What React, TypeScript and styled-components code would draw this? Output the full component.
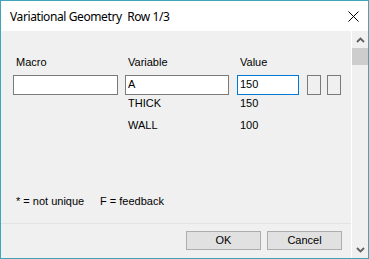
import styled, { createGlobalStyle } from 'styled-components'

const GlobalStyle = createGlobalStyle`
  html, body {
    margin: 0;
    padding: 0;
    background: #ffffff;
  }
  body {
    font-family: 'Liberation Sans', Arial, sans-serif;
  }
`

const Window = styled.div`
  width: 369px;
  height: 259px;
  box-sizing: border-box;
  border: 1px solid #3fa6b7;
  display: flex;
  flex-direction: column;
  background: #f0f0f0;
`
const TitleBar = styled.div`
  height: 30px;
  flex-shrink: 0;
  background: #ffffff;
  display: flex;
  align-items: center;
  justify-content: space-between;
  padding: 0 9px 0 9px;
`
const Title = styled.div`
  font-family: 'Noto Sans', 'Open Sans', sans-serif;
  font-size: 12px;
  letter-spacing: -0.4px;
  color: #000;
  white-space: pre;
`
const CloseBox = styled.div`
  width: 12px;
  height: 12px;
  display: flex;
  align-items: center;
  justify-content: center;
`
const Body = styled.div`
  flex: 1;
  display: flex;
  flex-direction: row;
  min-height: 0;
`
const Content = styled.div`
  flex: 1;
  display: flex;
  flex-direction: column;
  font-size: 11px;
  line-height: 13px;
  color: #000;
`
const Fields = styled.div`
  display: grid;
  grid-template-columns: 112px 112px 70px 20px 14px;
  grid-template-rows: 19px 22px 22px 13px;
  padding: 25px 0 0 12px;
  align-items: start;
`
const Label = styled.div<{ $inset?: boolean }>`
  padding-left: ${(p) => (p.$inset ? 3 : 0)}px;
  white-space: nowrap;
`
const Input = styled.div<{ $w: number; $focus?: boolean }>`
  width: ${(p) => p.$w}px;
  height: 20px;
  box-sizing: border-box;
  border: 1px solid ${(p) => (p.$focus ? '#0078d7' : '#7a7a7a')};
  background: #ffffff;
  padding: 2px 2px 0 2px;
  white-space: nowrap;
`
const SmallButton = styled.div`
  width: 14px;
  height: 20px;
  box-sizing: border-box;
  border: 1px solid #7a7a7a;
  background: #f0f0f0;
`
const Notes = styled.div`
  margin-top: auto;
  margin-bottom: 15px;
  display: flex;
  padding-left: 15px;
`
const Note = styled.div<{ $w?: number }>`
  width: ${(p) => (p.$w ? `${p.$w}px` : 'auto')};
  white-space: nowrap;
`
const Footer = styled.div`
  border-top: 1px solid #e3e3e3;
  padding: 7px 9px 8px 0;
  display: flex;
  justify-content: flex-end;
  gap: 6px;
`
const Button = styled.div`
  width: 75px;
  height: 19px;
  box-sizing: border-box;
  border: 1px solid #adadad;
  background: #e1e1e1;
  display: flex;
  align-items: center;
  justify-content: center;
`
const ScrollBar = styled.div`
  width: 16px;
  border-left: 1px solid #ffffff;
  display: flex;
  flex-direction: column;
  background: #f0f0f0;
`
const ArrowBox = styled.div`
  height: 17px;
  display: flex;
  align-items: center;
  justify-content: center;
`
const Thumb = styled.div`
  height: 17px;
  background: #cdcdcd;
`
const Track = styled.div`
  flex: 1;
`

const Chevron = ({ up }: { up?: boolean }) => (
  <svg width="9" height="6" viewBox="0 0 9 6">
    <path
      d={up ? 'M1 5 L4.5 1.5 L8 5' : 'M1 1 L4.5 4.5 L8 1'}
      fill="none"
      stroke="#606060"
      strokeWidth="1.8"
    />
  </svg>
)

const App = () => {
  return (
    <>
      <GlobalStyle />
      <Window>
        <TitleBar>
          <Title>Variational Geometry  Row 1/3</Title>
          <CloseBox>
            <svg width="11" height="11" viewBox="0 0 11 11">
              <path d="M0.5 0.5 L10.5 10.5 M10.5 0.5 L0.5 10.5" stroke="#000" strokeWidth="1" />
            </svg>
          </CloseBox>
        </TitleBar>
        <Body>
          <Content>
            <Fields>
              <Label $inset>Macro</Label>
              <Label $inset>Variable</Label>
              <Label $inset>Value</Label>
              <div />
              <div />
              <Input $w={105} />
              <Input $w={104}>A</Input>
              <Input $w={62} $focus>
                150
              </Input>
              <SmallButton />
              <SmallButton />
              <div />
              <Label $inset>THICK</Label>
              <Label $inset>150</Label>
              <div />
              <div />
              <div />
              <Label $inset>WALL</Label>
              <Label $inset>100</Label>
              <div />
              <div />
            </Fields>
            <Notes>
              <Note $w={84}>* = not unique</Note>
              <Note>F = feedback</Note>
            </Notes>
            <Footer>
              <Button>OK</Button>
              <Button>Cancel</Button>
            </Footer>
          </Content>
          <ScrollBar>
            <ArrowBox>
              <Chevron up />
            </ArrowBox>
            <Thumb />
            <Track />
            <ArrowBox>
              <Chevron />
            </ArrowBox>
          </ScrollBar>
        </Body>
      </Window>
    </>
  )
}

export default App
